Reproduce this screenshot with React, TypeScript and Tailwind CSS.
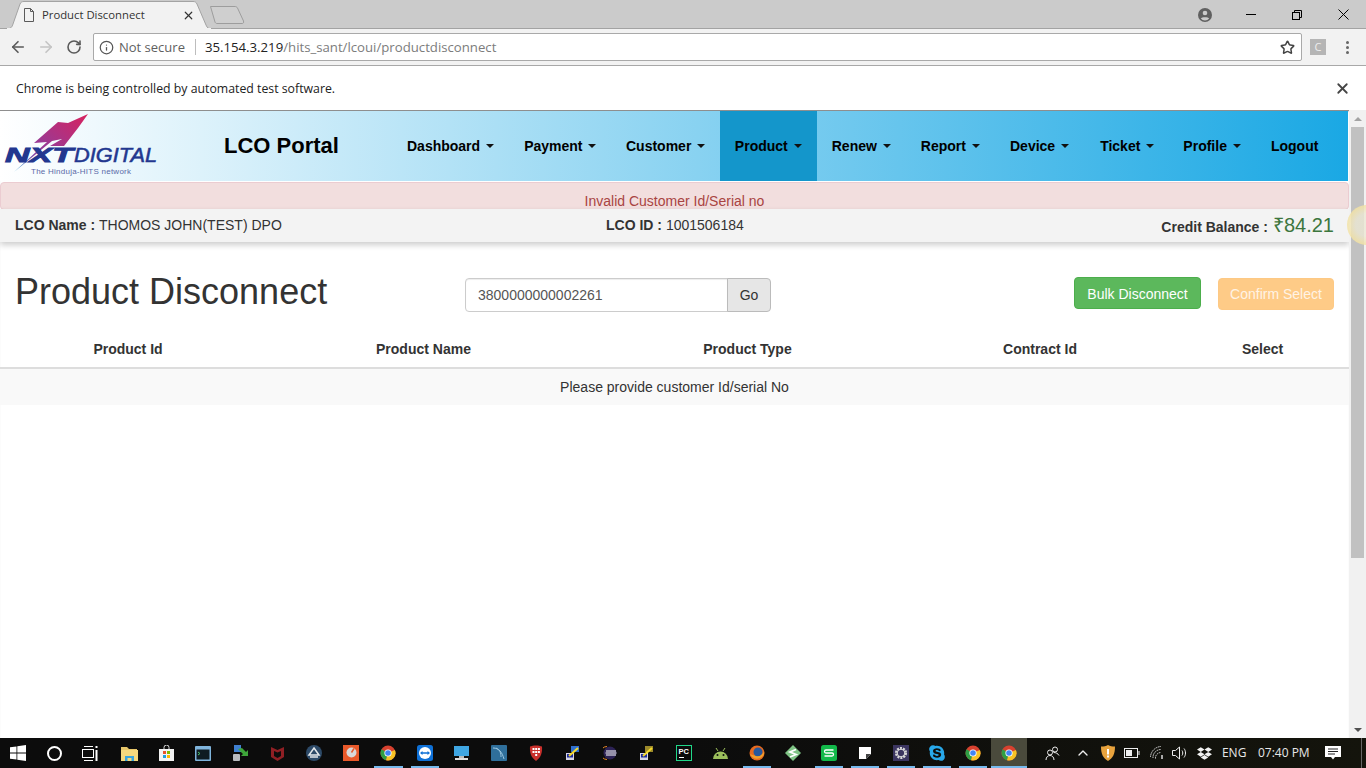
import React from 'react';
import { ArrowLeft, ArrowRight, RotateCw, Info, Star, X, ChevronUp } from 'lucide-react';
import { FaSkype, FaDropbox } from 'react-icons/fa';

const navItems = [
    { text: 'Dashboard', caret: true, cls: 'flex items-center px-[15px]' },
    { text: 'Payment', caret: true, cls: 'flex items-center px-[15px]' },
    { text: 'Customer', caret: true, cls: 'flex items-center px-[15px] -ml-[0.5px]' },
    { text: 'Product', caret: true, cls: 'flex items-center px-[15px] -ml-[0.5px] bg-[#1496cb]' },
    { text: 'Renew', caret: true, cls: 'flex items-center px-[15px]' },
    { text: 'Report', caret: true, cls: 'flex items-center px-[15px]' },
    { text: 'Device', caret: true, cls: 'flex items-center px-[15px]' },
    { text: 'Ticket', caret: true, cls: 'flex items-center px-[15px] ml-px' },
    { text: 'Profile', caret: true, cls: 'flex items-center px-[15px] -ml-px' },
    { text: 'Logout', caret: false, cls: 'flex items-center px-[15px]' },
];

const columns = ['Product Id', 'Product Name', 'Product Type', 'Contract Id', 'Select'];

const ChromeLogo = () => (
    <svg width="16" height="16" viewBox="0 0 16 16">
        <circle cx="8" cy="8" r="7.5" fill="#d8412f" />
        <path d="M8 8 L1.5 4.3 A7.5 7.5 0 0 0 6 15.2 Z" fill="#2f9e44" />
        <path d="M8 8 L14.9 5 A7.5 7.5 0 0 1 6 15.2 Z" fill="#f7c325" />
        <circle cx="8" cy="8" r="3.6" fill="#fff" />
        <circle cx="8" cy="8" r="2.8" fill="#4285f4" />
    </svg>
);

const Putty = ({ accent }: { accent: string }) => (
    <svg width="16" height="16" viewBox="0 0 16 16">
        <rect x="1" y="8" width="8" height="7" fill="#d5d5e5" />
        <rect x="2" y="9" width="6" height="3.5" fill="#1c2a9c" />
        <rect x="6" y="1" width="8" height="6" fill={accent} />
        <path d="M4 11 L13 3" stroke="#f4d92c" strokeWidth="2" />
    </svg>
);

const taskbarIcons: { key: string; bar?: boolean; node: React.ReactNode }[] = [
    {
        key: 'explorer',
        node: (
            <svg width="17" height="15" viewBox="0 0 17 15">
                <path d="M0 1h6l2 2h8v2H0z" fill="#e8c76a" />
                <rect y="4" width="17" height="11" fill="#f6d97e" />
                <path d="M4 15v-5h9v5h-2.500v-3h-4v3z" fill="#3aa5dd" />
            </svg>
        ),
    },
    {
        key: 'store',
        node: (
            <svg width="15" height="16" viewBox="0 0 15 16">
                <path d="M5 4V2.500a2.500 2.500 0 0 1 5 0V4" fill="none" stroke="#ddd" />
                <rect y="4" width="15" height="12" fill="#f3f3f3" />
                <rect x="4" y="6" width="3" height="3" fill="#e8532b" />
                <rect x="8" y="6" width="3" height="3" fill="#7fba00" />
                <rect x="4" y="10" width="3" height="3" fill="#1d9fe0" />
                <rect x="8" y="10" width="3" height="3" fill="#ffb900" />
            </svg>
        ),
    },
    {
        key: 'cmder',
        node: (
            <svg width="16" height="15" viewBox="0 0 16 15">
                <rect width="16" height="15" rx="1" fill="#7fb4dc" />
                <rect x="1.500" y="3.500" width="13" height="10" fill="#0f1b22" />
                <path d="M3 6l2 1.500-2 1.500" fill="none" stroke="#4ac26b" />
            </svg>
        ),
    },
    {
        key: 'vpn',
        node: (
            <svg width="17" height="17" viewBox="0 0 17 17">
                <rect x="2" width="7" height="7" fill="#3f7fd0" />
                <rect x="1" y="9" width="7" height="7" rx="1" fill="#b9bcc0" />
                <path d="M6 4l5 5-2 2h7V5l-2 2-4-4z" fill="#3ea53a" />
            </svg>
        ),
    },
    {
        key: 'mcafee',
        node: (
            <svg width="15" height="16" viewBox="0 0 15 16">
                <path d="M1 2l6.500 3L14 2v10l-6.500 4L1 12z" fill="#8f1f24" />
                <path d="M4 6l3.500 1.500L11 6v5l-3.500 2L4 11z" fill="#0c0c0c" />
            </svg>
        ),
    },
    {
        key: 'aorus',
        node: (
            <svg width="16" height="16" viewBox="0 0 16 16">
                <circle cx="8" cy="8" r="8" fill="#2d4a68" />
                <path d="M8 3l5 7H3z" fill="none" stroke="#e4e8ec" strokeWidth="1.500" />
                <path d="M4 12h8" stroke="#e4e8ec" strokeWidth="1.500" />
            </svg>
        ),
    },
    {
        key: 'recorder',
        node: (
            <svg width="16" height="16" viewBox="0 0 16 16">
                <rect width="16" height="16" fill="#e9592a" />
                <circle cx="8.500" cy="7.500" r="5" fill="#d9d9d9" />
                <path d="M8.500 7.500L11 3.500" stroke="#e9592a" strokeWidth="1.500" />
            </svg>
        ),
    },
    { key: 'chrome-1', bar: true, node: <ChromeLogo /> },
    {
        key: 'teamviewer',
        bar: true,
        node: (
            <svg width="16" height="16" viewBox="0 0 16 16">
                <rect width="16" height="16" rx="2.500" fill="#0e70d6" />
                <circle cx="8" cy="8" r="6" fill="#fff" />
                <path d="M3 8l2.500-2v1.300h5V6L13 8l-2.500 2V8.700h-5V10z" fill="#0e70d6" />
            </svg>
        ),
    },
    {
        key: 'monitor',
        node: (
            <svg width="17" height="16" viewBox="0 0 17 16">
                <rect x="1" y="1" width="15" height="10" fill="#3fa6e2" />
                <rect x="6" y="11" width="5" height="2" fill="#bbb" />
                <rect x="2" y="13" width="13" height="2" fill="#ddd" />
            </svg>
        ),
    },
    {
        key: 'mysql',
        node: (
            <svg width="16" height="16" viewBox="0 0 16 16">
                <rect width="16" height="16" rx="1" fill="#2f6f9b" />
                <path d="M2 3c6 0 9 4 11 11M5 3c4 2 5 5 5 9" fill="none" stroke="#9bc6e0" />
            </svg>
        ),
    },
    {
        key: 'bitdefender',
        node: (
            <svg width="14" height="16" viewBox="0 0 14 16">
                <path d="M1 1.500C4 0 10 0 13 1.500c.5 6-1 11-6 14.500C2 12.500.5 7.500 1 1.500z" fill="#c9302c" />
                <g fill="#fff">
                    <rect x="3.500" y="3" width="2" height="2" />
                    <rect x="6.200" y="3" width="2" height="2" />
                    <rect x="8.900" y="3" width="2" height="2" />
                    <rect x="3.500" y="6" width="2" height="2" />
                    <rect x="6.200" y="6" width="2" height="2" />
                    <rect x="8.900" y="6" width="2" height="2" />
                    <rect x="6.200" y="9" width="2" height="2" />
                </g>
            </svg>
        ),
    },
    { key: 'putty-1', node: <Putty accent="#2f6fce" /> },
    {
        key: 'eclipse',
        node: (
            <svg width="14" height="14" viewBox="0 0 14 14">
                <circle cx="7" cy="7" r="6.500" fill="#2c2255" />
                <path d="M3 5h10M2.500 7h11M3 9h10" stroke="#fff" />
                <path d="M4 .5A6.500 6.500 0 0 0 4 13.500" fill="none" stroke="#e7892c" />
            </svg>
        ),
    },
    { key: 'putty-2', node: <Putty accent="#9c8a2a" /> },
    {
        key: 'pycharm',
        node: (
            <svg width="16" height="16" viewBox="0 0 16 16">
                <rect x=".5" y=".5" width="15" height="15" fill="#0b0b0b" stroke="#21d789" />
                <text x="2.500" y="8.500" fill="#fff" fontSize="7.500" fontWeight="700" fontFamily="'Liberation Sans', sans-serif">PC</text>
                <rect x="3" y="12" width="5" height="1" fill="#fff" />
            </svg>
        ),
    },
    {
        key: 'android',
        node: (
            <svg width="17" height="12" viewBox="0 0 17 12">
                <path d="M1 11a7.500 7.500 0 0 1 15 0z" fill="#9cbf5c" transform="translate(0 1)" />
                <path d="M4 1l2 3M13 1l-2 3" stroke="#9cbf5c" />
                <circle cx="5.500" cy="8" r="1" fill="#0c0c0c" />
                <circle cx="11.500" cy="8" r="1" fill="#0c0c0c" />
            </svg>
        ),
    },
    {
        key: 'firefox',
        bar: true,
        node: (
            <svg width="16" height="16" viewBox="0 0 16 16">
                <circle cx="8" cy="8" r="7.500" fill="#e66a1f" />
                <circle cx="9" cy="7" r="4.500" fill="#27589c" />
                <path d="M1 9c2 5 8 6 12 3 2-2 2.500-4 2-6-1 4-5 6-8 5-2-.5-3-1-6-2z" fill="#f0a02b" />
            </svg>
        ),
    },
    {
        key: 'sublime',
        node: (
            <svg width="16" height="16" viewBox="0 0 16 16">
                <path d="M8 0l8 8-8 8-8-8z" fill="#7ec384" />
                <path d="M11 4.500L5 7l6 2.500L5 12" fill="none" stroke="#fff" strokeWidth="1.800" />
            </svg>
        ),
    },
    {
        key: 'sheets',
        bar: true,
        node: (
            <svg width="16" height="16" viewBox="0 0 16 16">
                <rect width="16" height="16" rx="2.500" fill="#12b94a" />
                <path d="M12.500 5H5a1.500 1.500 0 0 0 0 3h6a1.500 1.500 0 0 1 0 3H3.500" fill="none" stroke="#fff" strokeWidth="1.300" />
            </svg>
        ),
    },
    {
        key: 'notes',
        bar: true,
        node: (
            <svg width="12" height="12" viewBox="0 0 12 12">
                <path d="M0 0h12v7L7 12H0z" fill="#fff" />
                <path d="M7 12V7h5z" fill="#444" />
            </svg>
        ),
    },
    {
        key: 'gear',
        bar: true,
        node: (
            <svg width="16" height="16" viewBox="0 0 16 16">
                <rect width="16" height="16" fill="#3b3560" />
                <circle cx="8" cy="8" r="4.800" fill="none" stroke="#d8d8d8" strokeWidth="2.500" strokeDasharray="2 1" />
                <circle cx="8" cy="8" r="3.800" fill="none" stroke="#d8d8d8" />
            </svg>
        ),
    },
    { key: 'skype', bar: true, node: <FaSkype className="text-[18px] text-[#28a8ea]" /> },
    { key: 'chrome-2', bar: true, node: <ChromeLogo /> },
];

const Logo = () => (
    <svg width="157" height="68" viewBox="0 0 157 68">
        <defs>
            <linearGradient id="swoosh" x1="0" y1="1" x2="1" y2="0">
                <stop offset="0" stopColor="#3ab0dc" />
                <stop offset="0.3" stopColor="#8c3fa0" />
                <stop offset="1" stopColor="#d8225e" />
            </linearGradient>
        </defs>
        <path d="M14 60 L47 30 L34 31 L58 10 L68 11 L88 2 L78 16 L64 34 L50 34 L62 27 L52 29 Z" fill="url(#swoosh)" />
        <text x="5" y="50" fontFamily="'Liberation Sans', sans-serif" fontSize="21" fontWeight="700" fontStyle="italic" fill="#22378f" stroke="#22378f" strokeWidth="0.900" textLength="68" lengthAdjust="spacingAndGlyphs">NXT</text>
        <text x="74" y="50" fontFamily="'Liberation Sans', sans-serif" fontSize="20" fontStyle="italic" fill="#22378f" stroke="#22378f" strokeWidth="0.500" textLength="83" lengthAdjust="spacingAndGlyphs">DIGITAL</text>
        <text x="31" y="62" fontFamily="'Liberation Sans', sans-serif" fontSize="8" fill="#5a6aa8" textLength="100">The Hinduja-HITS network</text>
    </svg>
);

const App: React.FC = () => {
    return (
        <div className="relative w-[1366px] h-[768px] flex flex-col overflow-hidden bg-white font-['Liberation_Sans',sans-serif] text-[14px] text-[#333]">

            {/* Tab strip */}
            <div className="h-[29px] shrink-0 flex items-end bg-[#cbcbcb] border-b border-[#a3a3a3] pl-[6px] font-['Open_Sans',sans-serif]">
                <div className="relative w-[206px] h-[28px] flex items-center pl-[17px] pr-[17px] -mb-px">
                    <svg className="absolute inset-0" width="206" height="28" viewBox="0 0 206 28">
                        <path d="M0 28 C5 28 6 26 7 23 L14 3 C15 1 16 0.500 18 0.500 H187 C189 0.500 190 1 191 3 L200 24 C201 27 203 28 206 28 Z" fill="#f2f2f2" stroke="#a3a3a3" />
                        <rect x="1" y="27" width="204" height="1" fill="#f2f2f2" />
                    </svg>
                    <svg className="relative" width="12" height="14" viewBox="0 0 12 14" fill="none" stroke="#5a5a5a">
                        <path d="M1.500 .5h6l3 3v10h-9zM7.500 .5v3h3" />
                    </svg>
                    <span className="relative ml-[7px] text-[11.3px] text-[#333] whitespace-nowrap">Product Disconnect</span>
                    <X className="relative ml-auto text-[#333]" size={13} strokeWidth={2.2} />
                </div>
                <svg className="mb-[3px] -ml-[3px]" width="36" height="20" viewBox="0 0 36 20">
                    <path d="M1.500 1.500 H26 C27 1.500 28 2 28.500 3 L34.500 16 C35 18 34 18.500 33 18.500 H8 C7 18.500 6.500 18 6 17 Z" fill="#cfcfcf" stroke="#9d9d9d" />
                </svg>
                <div className="ml-auto h-[27px] flex items-center text-[#333]">
                    <svg className="mr-[16px]" width="14" height="14" viewBox="0 0 14 14">
                        <circle cx="7" cy="7" r="7" fill="#606060" />
                        <circle cx="7" cy="5" r="2.300" fill="#cbcbcb" />
                        <path d="M2.800 10.500c1-1.800 7.400-1.800 8.400 0A5.500 5.500 0 0 1 2.800 10.500z" fill="#cbcbcb" />
                    </svg>
                    <div className="w-[46px] flex justify-center"><div className="w-[10px] h-px bg-black" /></div>
                    <div className="w-[46px] flex justify-center">
                        <svg width="10" height="10" viewBox="0 0 10 10" fill="none" stroke="#000">
                            <rect x=".5" y="2.500" width="7" height="7" />
                            <path d="M2.500 2.500v-2h7v7h-2" />
                        </svg>
                    </div>
                    <div className="w-[46px] flex justify-center">
                        <svg width="11" height="11" viewBox="0 0 11 11" stroke="#000"><path d="M.5.5l10 10M10.500.5l-10 10" /></svg>
                    </div>
                </div>
            </div>

            {/* Address bar */}
            <div className="h-[37px] shrink-0 flex items-center bg-[#f2f2f2] border-b border-[#a8a8a8] pl-[9px] font-['Open_Sans',sans-serif]">
                <ArrowLeft size={18} strokeWidth={2.2} className="text-[#5a5a5a]" />
                <ArrowRight size={18} strokeWidth={2.2} className="ml-[10px] text-[#c4c4c4]" />
                <RotateCw size={16} strokeWidth={2.4} className="ml-[11px] text-[#5a5a5a]" />
                <div className="ml-[11px] w-[1209px] h-[28px] flex items-center bg-white border border-[#a9a9a9] rounded-[2px] pl-[5px] pr-[6px]">
                    <Info size={15} strokeWidth={2} className="text-[#555]" />
                    <span className="ml-[5px] mt-[2px] text-[13px] text-[#5f5f5f] whitespace-nowrap">Not secure</span>
                    <div className="ml-[10px] mr-[9px] w-px h-[16px] bg-[#bdbdbd]" />
                    <span className="mt-[2px] text-[13.2px] whitespace-nowrap text-[#222]">35.154.3.219<span className="text-[#7c7c7c]">/hits_sant/lcoui/productdisconnect</span></span>
                    <Star size={15} strokeWidth={2.4} className="ml-auto text-[#444]" />
                </div>
                <div className="ml-[8px] w-[16px] h-[16px] flex items-center justify-center bg-[#b5b5b5] text-[11px] text-[#eee]">C</div>
                <div className="ml-[20px] flex flex-col gap-[2px]">
                    <div className="w-[3px] h-[3px] rounded-full bg-[#666]" />
                    <div className="w-[3px] h-[3px] rounded-full bg-[#666]" />
                    <div className="w-[3px] h-[3px] rounded-full bg-[#666]" />
                </div>
            </div>

            {/* Automation infobar */}
            <div className="h-[44px] shrink-0 flex items-center justify-between bg-white pl-[16px] pr-[15px] font-['Open_Sans',sans-serif] text-[12.3px] text-[#222]">
                <span className="mt-[2px]">Chrome is being controlled by automated test software.</span>
                <X size={17} strokeWidth={2.5} className="text-[#444]" />
            </div>

            {/* Page viewport */}
            <div className="relative flex-1 flex min-h-0">
                <div className="w-[1349px] shrink-0 flex flex-col bg-white border-t border-[#8e8e8e] shadow-[inset_0_1px_1px_rgba(0,0,0,0.15)]">

                    {/* Navbar */}
                    <div className="h-[70px] shrink-0 mr-px flex bg-linear-to-r/srgb from-white to-[#1aa8e4]">
                        <div className="w-[224px] shrink-0 flex items-center"><Logo /></div>
                        <div className="w-[168px] shrink-0 flex items-center text-[22px] font-bold text-black leading-none">LCO Portal</div>
                        <div className="flex flex-1 text-black font-bold">
                            {navItems.map((item) => (
                                <div key={item.text} className={item.cls}>
                                    <span>{item.text}</span>
                                    {item.caret && <span className="ml-[6px] w-0 h-0 border-x-[4px] border-x-transparent border-t-[4px] border-t-[#111]" />}
                                </div>
                            ))}
                        </div>
                    </div>

                    {/* Alert */}
                    <div className="h-[28px] shrink-0 mt-px flex items-start justify-center pt-[10px] bg-[#f2dede] border border-[#ebccd1] rounded-[4px] text-[#a94442] leading-[17px]">
                        Invalid Customer Id/Serial no
                    </div>

                    {/* LCO info */}
                    <div className="h-[33px] shrink-0 flex items-center bg-[#f3f3f3] pl-[15px] pr-[15px] shadow-[0_3px_6px_rgba(0,0,0,0.2)] -mt-px">
                        <div className="w-[591px]"><b>LCO Name : </b>THOMOS JOHN(TEST) DPO</div>
                        <div><b>LCO ID : </b>1001506184</div>
                        <div className="ml-auto mt-[2px] flex items-baseline">
                            <b>Credit Balance : </b>
                            <span className="ml-[5px] text-[20px] leading-none text-[#3c763d]">₹84.21</span>
                        </div>
                    </div>

                    {/* Title row */}
                    <div className="h-[89px] shrink-0 flex px-[15px]">
                        <h1 className="w-[450px] pt-[30px] text-[36px] leading-[40px] text-[#333]">Product Disconnect</h1>
                        <div className="flex pt-[36px]">
                            <div className="w-[263px] h-[34px] flex items-center pl-[12px] bg-white border border-[#ccc] rounded-l-[4px] text-[#555] shadow-[inset_0_1px_1px_rgba(0,0,0,0.075)]">3800000000002261</div>
                            <div className="w-[44px] h-[34px] -ml-px flex items-center justify-center bg-[#e6e6e6] border border-[#bbb] rounded-r-[4px] text-[#333]">Go</div>
                        </div>
                        <div className="ml-auto flex gap-[17px] pt-[35px]">
                            <div className="w-[127px] h-[32px] pt-[2px] flex items-center justify-center bg-[#5cb85c] border border-[#4cae4c] rounded-[4px] text-white">Bulk Disconnect</div>
                            <div className="w-[116px] h-[32px] mt-px flex items-center justify-center bg-[#fecb87] border border-[#fdc985] rounded-[4px] text-[#fff3e5]">Confirm Select</div>
                        </div>
                    </div>

                    {/* Table */}
                    <div className="grid grid-cols-[256px_335px_313px_272px_173px] h-[38px] shrink-0 items-center border-b-2 border-[#ddd] font-bold">
                        {columns.map((c) => (
                            <div key={c} className="text-center">{c}</div>
                        ))}
                    </div>
                    <div className="h-[36px] shrink-0 flex items-center justify-center bg-[#f9f9f9]">Please provide customer Id/serial No</div>
                </div>

                {/* Scrollbar */}
                <div className="w-[17px] shrink-0 flex flex-col bg-[#f1f1f1]">
                    <div className="h-[17px] flex items-center justify-center">
                        <div className="w-0 h-0 border-x-[4px] border-x-transparent border-b-[4px] border-b-[#a3a3a3]" />
                    </div>
                    <div className="h-[431px] mx-[2px] bg-[#c1c1c1]" />
                    <div className="mt-auto h-[17px] flex items-center justify-center">
                        <div className="w-0 h-0 border-x-[4px] border-x-transparent border-t-[4px] border-t-[#505050]" />
                    </div>
                </div>

                {/* Mouse highlight */}
                <div className="absolute left-[1347px] top-[95px] w-[40px] h-[40px] rounded-full bg-radial from-[#ece8d4]/80 from-40% to-[#f9dc70]/90 to-100%" />
            </div>

            {/* Taskbar */}
            <div className="h-[30px] shrink-0 flex items-stretch bg-linear-to-r from-[#0c0c0c] via-[#0c0c0c] to-[#14140c] text-[#e8e8e8] font-['Open_Sans',sans-serif] text-[12px]">
                <div className="w-[36px] shrink-0 flex items-center justify-center">
                    <svg width="16" height="16" viewBox="0 0 16 16" fill="#fff">
                        <path d="M0 2.300l6.500-.9v6.200H0zM7.300 1.300L16 0v7.600H7.300zM0 8.400h6.500v6.200L0 13.700zM7.300 8.400H16V16l-8.700-1.300z" />
                    </svg>
                </div>
                <div className="w-[36px] shrink-0 flex items-center justify-center">
                    <div className="w-[15px] h-[15px] rounded-full border-2 border-white" />
                </div>
                <div className="w-[36px] shrink-0 flex items-center justify-center">
                    <svg width="16" height="15" viewBox="0 0 16 15" fill="none" stroke="#fff">
                        <path d="M2 .5h9M2 14.500h9" />
                        <rect x=".5" y="3.500" width="11" height="8" />
                        <path d="M14.500 0v2M14.500 4v11" strokeWidth="2" />
                    </svg>
                </div>
                <div className="w-[3px] shrink-0" />
                {taskbarIcons.map((icon, index) => (
                    <div
                        key={icon.key}
                        className={index < 17 ? 'relative w-[36.95px] shrink-0 flex items-center justify-center' : 'relative w-[36px] shrink-0 flex items-center justify-center'}
                    >
                        {icon.node}
                        {icon.bar && <div className="absolute bottom-0 left-[4px] right-[4px] h-[2px] bg-[#76b9ed]" />}
                    </div>
                ))}
                <div className="relative w-[36px] shrink-0 flex items-center justify-center bg-[#4a4a3c]">
                    <ChromeLogo />
                    <div className="absolute bottom-0 inset-x-0 h-[2px] bg-[#76b9ed]" />
                </div>
                <div className="flex-1 flex items-center pl-[18px]">
                    <svg className="shrink-0" width="15" height="15" viewBox="0 0 15 15" fill="none" stroke="#eee">
                        <circle cx="10" cy="3.500" r="2.500" />
                        <circle cx="5" cy="6.500" r="2.500" />
                        <path d="M1 14c0-3 2-4.500 4-4.500S9 11 9 14M8.500 6.500c2.500 0 4.500 1 5.500 3" />
                    </svg>
                    <ChevronUp size={16} className="ml-[15px] shrink-0 text-[#eee]" />
                    <svg className="ml-[10px] shrink-0" width="14" height="16" viewBox="0 0 14 16">
                        <path d="M0 1.500C3 1.500 5 1 7 0c2 1 4 1.500 7 1.500C14 9 12 13 7 16 2 13 0 9 0 1.500z" fill="#e8a33d" />
                        <rect x="6" y="4" width="2" height="5.500" fill="#fff" />
                        <rect x="6" y="10.500" width="2" height="2" fill="#fff" />
                    </svg>
                    <svg className="ml-[9px] shrink-0" width="16" height="10" viewBox="0 0 16 10" fill="none" stroke="#eee">
                        <rect x=".5" y=".5" width="13" height="9" />
                        <rect x="2" y="2" width="6" height="6" fill="#eee" stroke="none" />
                        <path d="M15 3v4" />
                    </svg>
                    <svg className="ml-[10px] shrink-0" width="14" height="14" viewBox="0 0 14 14" fill="none" stroke="#ddd">
                        <path d="M.5 11A11 11 0 0 1 11 .5M3 12A8 8 0 0 1 11 3.500M5.500 12.500A5.500 5.500 0 0 1 11 6.500" strokeDasharray="1.500 .7" />
                        <path d="M12 9v4" strokeWidth="1.500" />
                    </svg>
                    <svg className="ml-[8px] shrink-0" width="16" height="14" viewBox="0 0 16 14" fill="none" stroke="#eee">
                        <path d="M.5 4.500h3L7.500 1v12l-4-3.500h-3zM10 4.500c1 1.500 1 3.500 0 5M12 2.500c2 2.500 2 6.500 0 9" />
                    </svg>
                    <FaDropbox className="ml-[9px] shrink-0 text-[15px] text-[#f2f2f2]" />
                    <span className="ml-[10px] w-[36px] shrink-0">ENG</span>
                    <span className="w-[67px] shrink-0 whitespace-nowrap">07:40 PM</span>
                    <svg className="shrink-0" width="16" height="16" viewBox="0 0 16 16">
                        <path d="M0 1h16v11h-6l-2 2.500L6 12H0z" fill="#fff" />
                        <path d="M3 4h10M3 6.500h10M3 9h7" stroke="#222" />
                    </svg>
                    <div className="ml-[20px] w-px h-full shrink-0 bg-[#666]" />
                </div>
            </div>
        </div>
    );
};

export default App;
